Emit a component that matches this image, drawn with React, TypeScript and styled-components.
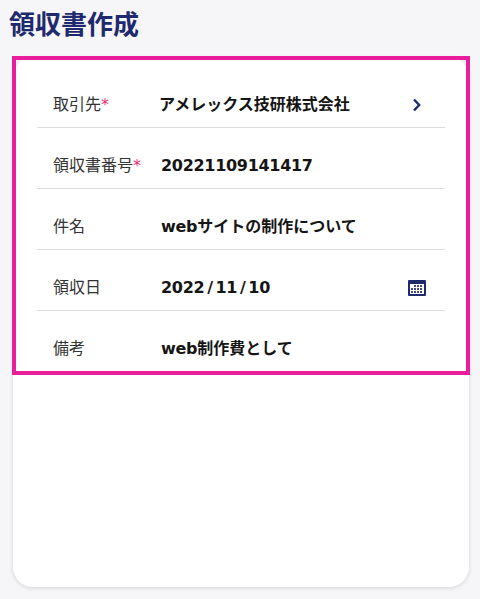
import React from 'react'
import styled, { createGlobalStyle } from 'styled-components'

const GlobalStyle = createGlobalStyle`
  html, body {
    margin: 0;
    padding: 0;
    height: 599px;
    overflow: hidden;
    background: #f6f6f9;
    font-family: "Noto Sans CJK JP", "Noto Sans", sans-serif;
  }
`

const Page = styled.div`
  padding: 5px 11px 0 13px;
`

const Title = styled.h1`
  margin: 0 0 16px -4px;
  height: 36px;
  font-size: 26px;
  line-height: 36px;
  font-weight: 700;
  color: #1f2a6e;
`

const Card = styled.div`
  position: relative;
  height: 530px;
  padding: 10px 24px 0;
  box-sizing: border-box;
  background: #fff;
  border-radius: 20px;
  box-shadow: 0 1px 4px rgba(0, 0, 0, 0.14);
`

const Highlight = styled.div`
  position: absolute;
  top: -1px;
  left: -1px;
  width: 458px;
  height: 319px;
  box-sizing: border-box;
  border: 4px solid #e91e9c;
  pointer-events: none;
`

const Row = styled.div<{ $last?: boolean }>`
  display: flex;
  align-items: center;
  height: 61px;
  box-sizing: border-box;
  padding: 11px 0 0 16px;
  border-bottom: ${props => (props.$last ? 'none' : '1px solid #dcdcdc')};
`

const Label = styled.span`
  width: 108px;
  flex-shrink: 0;
  font-size: 16px;
  color: #333;
  white-space: nowrap;
`

const Required = styled.span`
  font-family: "DejaVu Sans", sans-serif;
  color: #f0306a;
`

const Value = styled.span<{ $tight?: boolean }>`
  flex: 1;
  margin-left: ${props => (props.$tight ? '-2px' : '0')};
  font-family: "Noto Sans CJK JP", sans-serif;
  font-size: 16px;
  font-weight: 700;
  color: #151515;
  white-space: nowrap;
`

const Latin = styled.span`
  font-family: "DejaVu Sans", sans-serif;
  letter-spacing: -0.3px;
`

const Slash = styled.span`
  padding: 0 2.8px;
`

const IconSlot = styled.span`
  display: flex;
  width: 20px;
  margin-right: 18px;
  padding-top: 4px;
  justify-content: center;
`

const Chevron = () => (
  <svg width="10" height="14" viewBox="0 0 10 14">
    <path d="M2 1.5l5.2 5.5-5.2 5.5" fill="none" stroke="#1f2a6e" strokeWidth="2.4" />
  </svg>
)

const Calendar = () => (
  <svg width="18" height="16" viewBox="0 0 18 16">
    <rect width="18" height="16" rx="1" fill="#1f2a6e" />
    <rect x="2" y="4" width="14" height="10" fill="#fff" />
    {[5, 8, 11].map(y =>
      [3, 6, 9, 12].map(x =>
        <rect key={`${x}-${y}`} x={x} y={y} width="2" height="2" fill="#1f2a6e" opacity={y === 5 && x === 3 ? 0 : 0.85} />
      )
    )}
  </svg>
)

const App = () => (
  <Page>
    <GlobalStyle />
    <Title>領収書作成</Title>
    <Card>
      <Row>
        <Label>取引先<Required>*</Required></Label>
        <Value $tight>アメレックス技研株式会社</Value>
        <IconSlot><Chevron /></IconSlot>
      </Row>
      <Row>
        <Label>領収書番号<Required>*</Required></Label>
        <Value><Latin>20221109141417</Latin></Value>
      </Row>
      <Row>
        <Label>件名</Label>
        <Value><Latin>web</Latin>サイトの制作について</Value>
      </Row>
      <Row>
        <Label>領収日</Label>
        <Value><Latin>2022<Slash>/</Slash>11<Slash>/</Slash>10</Latin></Value>
        <IconSlot><Calendar /></IconSlot>
      </Row>
      <Row $last>
        <Label>備考</Label>
        <Value><Latin>web</Latin>制作費として</Value>
      </Row>
      <Highlight />
    </Card>
  </Page>
)

export default App
